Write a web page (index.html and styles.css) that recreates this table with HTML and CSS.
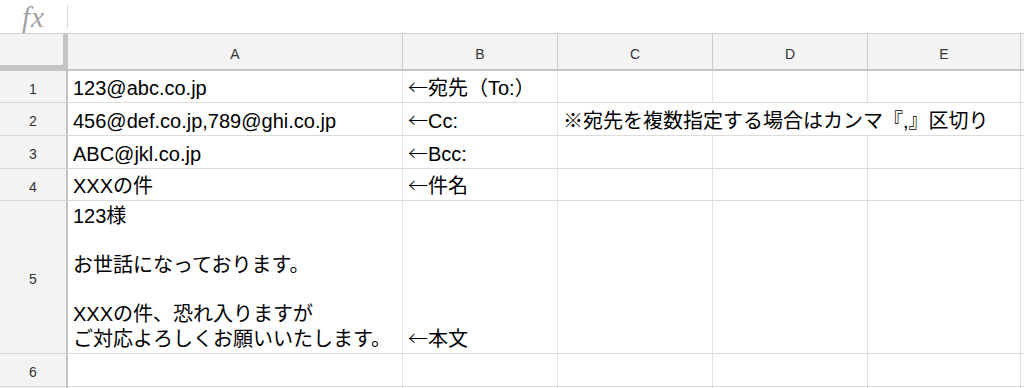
FILE: index.html
```html
<!DOCTYPE html>
<html lang="ja">
<head>
<meta charset="utf-8">
<title>Sheet</title>
<link rel="stylesheet" href="styles.css">
</head>
<body>
<div class="formula-bar">
  <div class="fx">fx</div>
  <div class="fx-sep"></div>
</div>
<div class="sheet">
  <div class="corner"></div>
  <div class="col-head">A</div>
  <div class="col-head">B</div>
  <div class="col-head">C</div>
  <div class="col-head">D</div>
  <div class="col-head">E</div>
  <div class="col-head"></div>

  <div class="row-head">1</div>
  <div class="cell">123@abc.co.jp</div>
  <div class="cell"><span><span class="arrow">←</span>宛先（To:）</span></div>
  <div class="cell"></div>
  <div class="cell"></div>
  <div class="cell"></div>
  <div class="cell"></div>

  <div class="row-head">2</div>
  <div class="cell">456@def.co.jp,789@ghi.co.jp</div>
  <div class="cell"><span><span class="arrow">←</span>Cc:</span></div>
  <div class="cell span3">※宛先を複数指定する場合はカンマ『,』区切り</div>
  <div class="cell"></div>

  <div class="row-head">3</div>
  <div class="cell">ABC@jkl.co.jp</div>
  <div class="cell"><span><span class="arrow">←</span>Bcc:</span></div>
  <div class="cell"></div>
  <div class="cell"></div>
  <div class="cell"></div>
  <div class="cell"></div>

  <div class="row-head">4</div>
  <div class="cell">XXXの件</div>
  <div class="cell"><span><span class="arrow">←</span>件名</span></div>
  <div class="cell"></div>
  <div class="cell"></div>
  <div class="cell"></div>
  <div class="cell"></div>

  <div class="row-head">5</div>
  <div class="cell"><span>123様<br><br>お世話になっております。<br><br>XXXの件、恐れ入りますが<br>ご対応よろしくお願いいたします。</span></div>
  <div class="cell"><span><span class="arrow">←</span>本文</span></div>
  <div class="cell"></div>
  <div class="cell"></div>
  <div class="cell"></div>
  <div class="cell"></div>

  <div class="row-head">6</div>
  <div class="cell"></div>
  <div class="cell"></div>
  <div class="cell"></div>
  <div class="cell"></div>
  <div class="cell"></div>
  <div class="cell"></div>

  <div class="row-head"></div>
  <div class="cell"></div>
  <div class="cell"></div>
  <div class="cell"></div>
  <div class="cell"></div>
  <div class="cell"></div>
  <div class="cell"></div>
</div>
</body>
</html>
```

FILE: styles.css
```css
html, body {
  margin: 0;
  padding: 0;
  background: #ffffff;
  overflow: hidden;
}

body {
  width: 1024px;
  height: 388px;
  font-family: "Liberation Sans", "Noto Sans CJK JP", sans-serif;
  color: #000;
}

.formula-bar {
  height: 33px;
  border-bottom: 1px solid #cfcfcf;
  display: flex;
  align-items: center;
}

.fx {
  width: 67px;
  text-align: center;
  font-family: "Liberation Serif", serif;
  font-style: italic;
  font-size: 29px;
  line-height: 30px;
  color: #a2a2a2;
  padding-top: 1px;
  letter-spacing: 1px;
}

.fx-sep {
  width: 1px;
  height: 25px;
  background: #dcdcdc;
}

.sheet {
  display: grid;
  grid-template-columns: 68px 335px 155px 155px 155px 153px 1fr;
  grid-template-rows: 37px 32px 33px 33px 32px 153px 33px 2px;
}

.corner {
  background: #f3f3f3;
  border-right: 5px solid #c4c4c4;
  border-bottom: 6px solid #c4c4c4;
}

.col-head {
  background: #f3f3f3;
  border-right: 1px solid #cccccc;
  border-bottom: 2px solid #c6c6c6;
  display: flex;
  align-items: center;
  justify-content: center;
  padding-top: 4px;
  font-size: 14px;
  color: #333;
}

.row-head {
  background: #f3f3f3;
  border-right: 2px solid #c4c4c4;
  border-bottom: 1px solid #d6d6d6;
  display: flex;
  align-items: center;
  justify-content: center;
  padding-top: 4px;
  font-size: 14px;
  color: #333;
}

.cell {
  border-right: 1px solid #e2e2e2;
  border-bottom: 1px solid #dcdcdc;
  display: flex;
  flex-direction: column;
  justify-content: flex-end;
  padding: 0 4px 2px 5px;
  font-size: 20px;
  line-height: 24.5px;
  white-space: nowrap;
  min-width: 0;
  overflow: hidden;
}

.arrow {
  font-family: "Noto Sans CJK JP", sans-serif;
  font-weight: 300;
}

.span3 {
  grid-column: span 3;
}
```
